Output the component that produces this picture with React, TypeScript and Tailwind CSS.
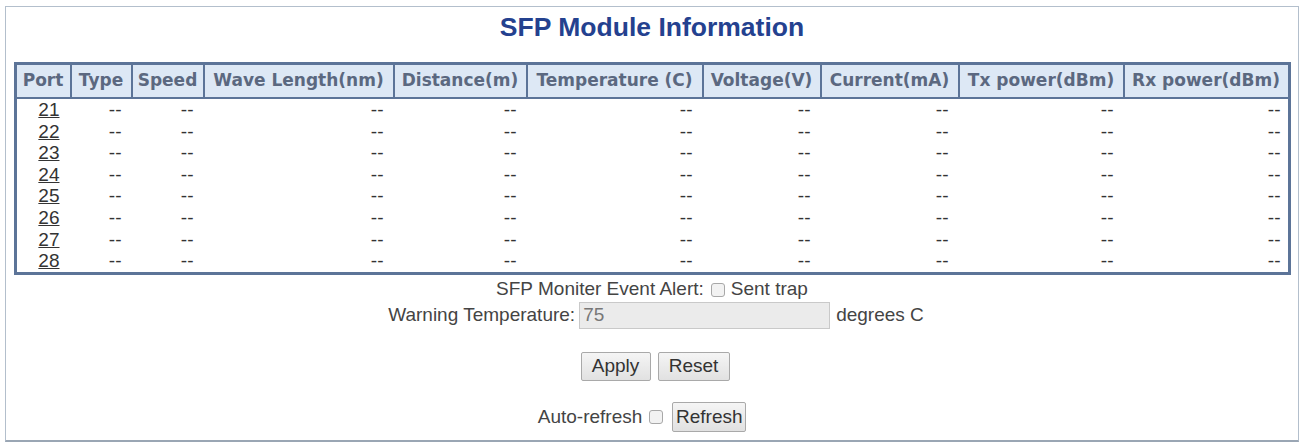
import React from "react";

const headers = [
  "Port",
  "Type",
  "Speed",
  "Wave Length(nm)",
  "Distance(m)",
  "Temperature (C)",
  "Voltage(V)",
  "Current(mA)",
  "Tx power(dBm)",
  "Rx power(dBm)",
];

const ports = [21, 22, 23, 24, 25, 26, 27, 28];

function Check() {
  return (
    <span className="inline-block w-[14px] h-[14px] rounded-[3px] border border-[#a8a8a8] bg-[#f2f2f2] align-middle" />
  );
}

const btn =
  "h-[29px] bg-gradient-to-b from-[#f5f5f5] to-[#e1e1e1] border border-[#a9a9a9] rounded-[2px] text-[19px] leading-[20px] text-[#333]";

export default function App() {
  return (
    <div className="w-[1300px] h-[443px] bg-white pt-[6px] pl-[5px]" style={{ fontFamily: '"Liberation Sans", Arial, sans-serif' }}>
      <div className="w-[1294px] h-[436px] border border-[#b3bfcc] border-b-2 border-b-[#9aa6b4] bg-white flex flex-col items-center">
        <div className="pt-[5px] text-[26.5px] leading-[30px] font-bold text-[#24418f]">
          SFP Module Information
        </div>
        <div className="mt-[20px] w-[1277px] border-[3px] border-[#5c7498]">
          <div className="grid grid-cols-[55px_61px_72px_190px_133px_176px_118px_138px_165px_163px] bg-[#dde8f5] border-b-2 border-[#5c7498]">
            {headers.map((h, i) => (
              <div
                key={h}
                className={
                  "h-[32px] flex items-center justify-center font-bold text-[17px] text-[#5b6880] whitespace-nowrap " +
                  (i < headers.length - 1 ? "border-r-2 border-[#5c7498]" : "")
                }
                style={{ fontFamily: '"DejaVu Sans", Verdana, sans-serif' }}
              >
                {h}
              </div>
            ))}
          </div>
          <div className="bg-white">
            {ports.map((p) => (
              <div
                key={p}
                className="grid grid-cols-[55px_61px_72px_190px_133px_176px_118px_138px_165px_163px] h-[21.6px] text-[19px] leading-[21.6px] text-[#333]"
              >
                <div className="text-right pr-[12px]">
                  <a href="#" className="underline text-[#333]">{p}</a>
                </div>
                {headers.slice(1).map((h, i) => (
                  <div
                    key={h}
                    className={"text-right " + (i === headers.length - 2 ? "pr-[7px]" : "pr-[11px]")}
                  >
                    --
                  </div>
                ))}
              </div>
            ))}
          </div>
        </div>
        <div className="mt-[4px] text-[19px] leading-[20px] text-[#444] flex items-center">
          <span>SFP Moniter Event Alert:</span>
          <span className="ml-[7px]"><Check /></span>
          <span className="ml-[6px]">Sent trap</span>
        </div>
        <div className="mt-[3px] pl-[8px] text-[19px] leading-[20px] text-[#444] flex items-center">
          <span>Warning Temperature:</span>
          <input
            readOnly
            defaultValue="75"
            className="ml-[4px] w-[251px] h-[27px] bg-[#ebebeb] border border-[#c9c9c9] px-[3px] text-[19px] text-[#777] outline-none"
            style={{ fontFamily: '"Liberation Sans", Arial, sans-serif' }}
          />
          <span className="ml-[6px]">degrees C</span>
        </div>
        <div className="mt-[23px] pl-[6px] flex items-center gap-[7px]">
          <button className={btn + " w-[70px]"}>Apply</button>
          <button className={btn + " w-[72px]"}>Reset</button>
        </div>
        <div className="mt-[21px] pr-[20px] flex items-center text-[19px] text-[#444]">
          <span>Auto-refresh</span>
          <span className="ml-[7px]"><Check /></span>
          <button className={btn + " ml-[9px] w-[74px] h-[30px]"}>Refresh</button>
        </div>
      </div>
    </div>
  );
}
